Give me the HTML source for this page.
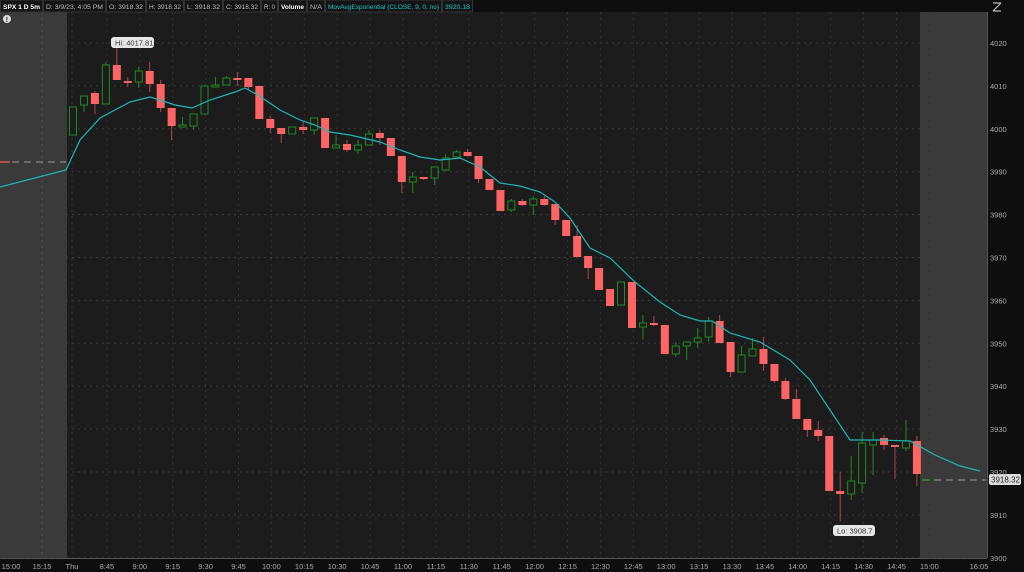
<!DOCTYPE html>
<html><head><meta charset="utf-8"><style>
body{margin:0;background:#1c1c1c;width:1024px;height:572px;overflow:hidden;font-family:"Liberation Sans",sans-serif}
</style></head><body>
<svg id="s" width="1024" height="572" xmlns="http://www.w3.org/2000/svg" style="display:block">
<rect width="1024" height="572" fill="#1c1c1c"/>
<rect x="0" y="12" width="67" height="546" fill="#3a3a3a"/>
<rect x="920" y="12" width="67" height="546" fill="#3a3a3a"/>
<rect x="987" y="0" width="37" height="572" fill="#0e0e0e"/>
<line x1="987.5" y1="12" x2="987.5" y2="558" stroke="#555"/>
<rect x="0" y="558" width="1024" height="14" fill="#0e0e0e"/>
<line x1="0" y1="558.5" x2="987" y2="558.5" stroke="#555"/>
<rect x="0" y="0" width="987" height="12" fill="#0e0e0e"/>
<g id="grid"></g><g id="c"></g>
<polyline fill="none" stroke="#1fb5b8" stroke-width="1.2" points="0,187 66,170 80,140 100,118 130,102 150,97 160,100 175,105 192,108 210,100 235,92 245,88 258,95 280,110 300,120 315,125 330,132 350,135 380,142 400,150 420,157 440,160 460,158 480,167 500,183 520,186 540,192 555,202 570,218 590,248 610,258 635,282 660,302 680,315 700,321 712,321 730,333 760,342 790,360 810,380 830,410 850,440 880,440 910,441 935,455 960,466 980,471"/>
<line x1="0" y1="162" x2="66" y2="162" stroke="#999" stroke-dasharray="7,5"/>
<line x1="0" y1="162" x2="10" y2="162" stroke="#e05555" stroke-width="1.5"/>
<line x1="922" y1="480" x2="986" y2="480" stroke="#999" stroke-dasharray="7,5"/>
<line x1="922" y1="480" x2="930" y2="480" stroke="#2a9a2a" stroke-width="1.5"/>
<rect x="111" y="37" width="43" height="11" rx="3" fill="#e6e6e6"/>
<text x="115" y="45.5" font-size="7.5" fill="#333">Hi: 4017.81</text>
<rect x="833" y="525" width="42" height="11" rx="3" fill="#e6e6e6"/>
<text x="837" y="533.5" font-size="7.5" fill="#333">Lo: 3908.7</text>
<rect x="989" y="474" width="32" height="11" rx="2" fill="#ddd"/>
<text x="991" y="482.5" font-size="8" fill="#222">3918.32</text>
<circle cx="7" cy="19" r="4" fill="#ddd"/><text x="5.8" y="22" font-size="7" font-weight="bold" fill="#222">!</text>
<g font-size="6.8" fill="#ccc" id="hdr"></g>
<g id="ax" font-size="7.5" fill="#aaa"></g>
<path d="M993 3h8M993 11h8M1001 3l-8 8" stroke="#bbb" stroke-width="1.2" fill="none"/>
</svg>
<script>
var NS="http://www.w3.org/2000/svg";
function el(p,t,a,tx){var e=document.createElementNS(NS,t);for(var k in a)e.setAttribute(k,a[k]);if(tx)e.textContent=tx;document.getElementById(p).appendChild(e);return e;}
var P=[4020,4010,4000,3990,3980,3970,3960,3950,3940,3930,3920,3910,3900];
P.forEach(function(p,i){var y=43+i*42.9;el('grid','line',{x1:0,x2:987,y1:y,y2:y,stroke:'#3a3a3a','stroke-dasharray':'2,4'});el('ax','text',{x:990,y:y+3},''+p);});
var T=['Thu','8:45','9:00','9:15','9:30','9:45','10:00','10:15','10:30','10:45','11:00','11:15','11:30','11:45','12:00','12:15','12:30','12:45','13:00','13:15','13:30','13:45','14:00','14:15','14:30','14:45','15:00'];
T.forEach(function(t,i){var x=74+i*32.9;if(i==0)x=72;el('grid','line',{x1:x,x2:x,y1:12,y2:558,stroke:'#333','stroke-dasharray':'2,4'});el('ax','text',{x:x,y:569,'text-anchor':'middle'},t);});
el('ax','text',{x:11,y:569,'text-anchor':'middle'},'15:00');el('ax','text',{x:42,y:569,'text-anchor':'middle'},'15:15');el('ax','text',{x:979,y:569,'text-anchor':'middle'},'16:05');
el('grid','line',{x1:42,x2:42,y1:12,y2:558,stroke:'#555','stroke-dasharray':'2,4'});
var C=[[107,135,107,135,'g'],[96,112,96,105,'g'],[91,114,93,104,'r'],[62,104,65,104,'g'],[48,80,65,80,'r'],[77,87,81,83,'r'],[67,88,71,82,'g'],[62,92,71,84,'r'],[80,112,84,108,'r'],[108,140,108,126,'r'],[117,127,125,127,'g'],[114,130,114,126,'g'],[86,114,86,114,'g'],[77,87,85,87,'g'],[76,85,78,85,'g'],[72,86,78,79,'r'],[78,90,78,87,'r'],[86,119,86,119,'r'],[116,133,119,128,'r'],[128,143,128,134,'r'],[127,134,127,134,'g'],[122,134,127,130,'r'],[118,135,118,130,'g'],[118,148,118,148,'r'],[135,148,145,148,'g'],[140,152,144,150,'r'],[140,154,145,150,'g'],[130,145,134,145,'g'],[130,145,133,138,'r'],[138,156,138,156,'r'],[156,193,156,182,'r'],[172,193,177,182,'g'],[177,180,177,179,'r'],[167,185,167,178,'g'],[154,170,158,170,'g'],[150,157,152,157,'g'],[149,156,152,156,'r'],[156,183,156,179,'r'],[179,190,179,190,'r'],[190,211,190,211,'r'],[199,212,201,210,'g'],[199,206,201,205,'r'],[196,215,199,205,'g'],[196,206,199,205,'r'],[204,225,204,220,'r'],[220,236,220,236,'r'],[225,257,236,257,'r'],[256,279,256,268,'r'],[268,290,268,290,'r'],[289,306,289,306,'r'],[282,305,282,305,'g'],[282,328,282,328,'r'],[315,340,323,327,'g'],[316,326,323,325,'r'],[325,354,325,354,'r'],[342,357,346,354,'g'],[342,360,342,346,'g'],[328,348,338,342,'g'],[317,342,321,337,'g'],[315,343,321,343,'r'],[342,377,342,372,'r'],[346,372,355,372,'g'],[338,356,349,356,'g'],[337,371,349,364,'r'],[364,383,364,381,'r'],[378,400,381,399,'r'],[389,419,399,419,'r'],[419,437,419,430,'r'],[421,441,430,436,'r'],[436,491,436,491,'r'],[472,521,491,494,'r'],[456,500,481,494,'g'],[432,493,443,483,'g'],[432,475,440,445,'g'],[435,450,438,445,'r'],[445,479,445,447,'r'],[420,451,441,448,'g'],[436,486,441,474,'r']];
C.forEach(function(c,i){var x=73+i*10.96,g=c[4]=='g',col=g?'#1f8a1f':'#ff6464',wk=g?'#1f8a1f':'#b04545';
el('c','line',{x1:x,x2:x,y1:c[0],y2:c[1],stroke:wk,'stroke-width':1});
var h=Math.max(c[3]-c[2],2);
if(g)el('c','rect',{x:x-3.5,y:c[2],width:7,height:h,fill:'#1c1c1c',stroke:col,'stroke-width':1});
else el('c','rect',{x:x-4,y:c[2],width:8,height:h,fill:col});});
var H=[['SPX 1 D 5m',0,42,'#fff',1],['D: 3/9/23, 4:05 PM',43,62,'#bbb'],['O: 3918.32',106,39,'#bbb'],['H: 3918.32',146,37,'#bbb'],['L: 3918.32',184,38,'#bbb'],['C: 3918.32',223,37,'#bbb'],['R: 0',261,16,'#bbb'],['Volume',278,28,'#fff',1],['N/A',307,17,'#bbb'],['MovAvgExponential (CLOSE, 9, 0, no)',325,116,'#1fc7c9'],['3920.18',442,30,'#1fc7c9']];
H.forEach(function(h){el('hdr','rect',{x:h[1]+.5,y:0,width:h[2],height:12,fill:'#141414',stroke:'#333'});var t=el('hdr','text',{x:h[1]+3,y:8.8,fill:h[3],textLength:h[2]-5,lengthAdjust:'spacingAndGlyphs'},h[0]);if(h[4])t.setAttribute('font-weight','bold');});
</script>
</body></html>
